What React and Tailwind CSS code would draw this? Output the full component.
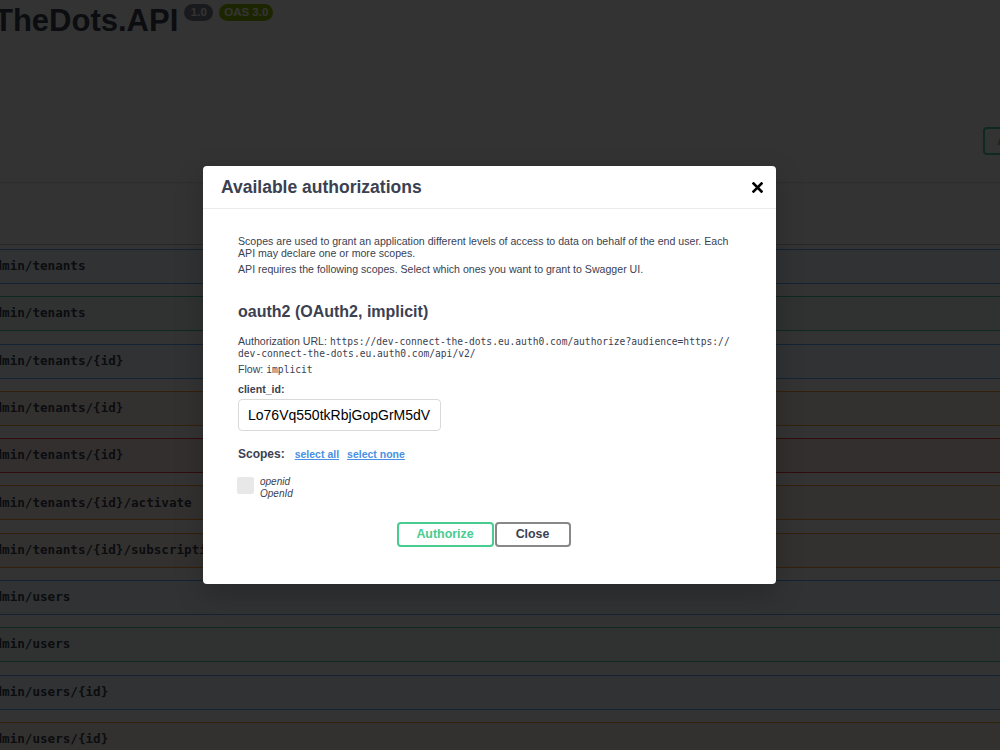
import React from "react";

const operations = [
  { method: "GET", path: "/api/admin/tenants" },
  { method: "POST", path: "/api/admin/tenants" },
  { method: "GET", path: "/api/admin/tenants/{id}" },
  { method: "PUT", path: "/api/admin/tenants/{id}" },
  { method: "DELETE", path: "/api/admin/tenants/{id}" },
  { method: "PUT", path: "/api/admin/tenants/{id}/activate" },
  { method: "PUT", path: "/api/admin/tenants/{id}/subscription" },
  { method: "GET", path: "/api/admin/users" },
  { method: "POST", path: "/api/admin/users" },
  { method: "GET", path: "/api/admin/users/{id}" },
  { method: "PUT", path: "/api/admin/users/{id}" },
];

const methodStyles = {
  GET: { row: "bg-[#61affe]/10 border-[#61affe]", badge: "bg-[#61affe]" },
  POST: { row: "bg-[#49cc90]/10 border-[#49cc90]", badge: "bg-[#49cc90]" },
  PUT: { row: "bg-[#fca130]/10 border-[#fca130]", badge: "bg-[#fca130]" },
  DELETE: { row: "bg-[#f93e3e]/10 border-[#f93e3e]", badge: "bg-[#f93e3e]" },
};

function OperationRow({ method, path }) {
  const s = methodStyles[method];
  return (
    <div className={`flex items-center h-[35px] border rounded-[4px] pl-[5px] ${s.row}`}>
      <span
        className={`w-[70px] h-[25px] rounded-[3px] flex items-center justify-center text-white text-[12px] font-bold ${s.badge}`}
      >
        {method}
      </span>
      <span className="ml-[9px] font-['DejaVu_Sans_Mono',monospace] text-[12.6px] font-semibold text-[#3b4151] whitespace-nowrap">
        {path}
      </span>
    </div>
  );
}

function LockIcon() {
  return (
    <svg width="14" height="14" viewBox="0 0 20 20" className="ml-[8px]" fill="#49cc90">
      <path d="M15.8 8H14V5.6C14 2.7 12.3 1 10 1S6 2.7 6 5.6V6h2v-.9C8 3.6 8.9 3 10 3s2 .6 2 2.1V8H4.2c-.7 0-1.2.5-1.2 1.2v8.6c0 .7.5 1.2 1.2 1.2h11.6c.7 0 1.2-.5 1.2-1.2V9.2c0-.7-.5-1.2-1.2-1.2z" />
    </svg>
  );
}

function CloseIcon() {
  return (
    <svg width="11" height="11" viewBox="0 0 11 11">
      <path d="M1.5 1.5 L9.5 9.5 M9.5 1.5 L1.5 9.5" stroke="#000" strokeWidth="2.6" strokeLinecap="square" />
    </svg>
  );
}

const mono = "font-['DejaVu_Sans_Mono',monospace] text-[9.65px]";

function AuthModal() {
  return (
    <div className="w-[573px] bg-white rounded-[4px] shadow-[0_10px_30px_0_rgba(0,0,0,0.2)] text-[#3b4151]">
      <div className="h-[43px] flex items-center justify-between pl-[18px] pr-[13px] border-b border-[#ebebeb]">
        <h3 className="text-[17.5px] font-bold text-[#3b4151]">Available authorizations</h3>
        <button className="flex items-center justify-center w-[12px] h-[12px]">
          <CloseIcon />
        </button>
      </div>

      <div className="px-[35px] pt-[26px] pb-[37px]">
        <p className="text-[10.6px] leading-[12px]">
          Scopes are used to grant an application different levels of access to data on behalf of the end user. Each API may declare one or more scopes.
        </p>
        <p className="mt-[4px] text-[10.6px] leading-[12px]">
          API requires the following scopes. Select which ones you want to grant to Swagger UI.
        </p>

        <h4 className="mt-[28px] text-[16px] leading-[18px] font-bold">oauth2 (OAuth2, implicit)</h4>

        <div className="mt-[14px] text-[10.6px] leading-[12px]">
          <div className="h-[12px] whitespace-nowrap">
            Authorization URL:{" "}
            <code className={mono}>https://dev-connect-the-dots.eu.auth0.com/authorize?audience=https://</code>
          </div>
          <div className="h-[12px] whitespace-nowrap">
            <code className={mono}>dev-connect-the-dots.eu.auth0.com/api/v2/</code>
          </div>
        </div>
        <div className="mt-[4px] h-[12px] text-[10.6px] leading-[12px]">
          Flow: <code className={mono}>implicit</code>
        </div>

        <label className="block mt-[8px] text-[10.6px] leading-[12px] font-bold">client_id:</label>
        <input
          readOnly
          value="Lo76Vq550tkRbjGopGrM5dV"
          className="block mt-[4px] w-[203px] h-[32px] border border-[#d9d9d9] rounded-[4px] px-[9px] text-[14px] text-black outline-none bg-white"
        />

        <div className="mt-[16px] flex items-baseline">
          <span className="text-[12px] leading-[14px] font-bold">Scopes:</span>
          <a href="#" className="ml-[10px] text-[10.5px] font-bold text-[#4990e2] underline">select all</a>
          <a href="#" className="ml-[8px] text-[10.5px] font-bold text-[#4990e2] underline">select none</a>
        </div>

        <div className="mt-[12px] flex items-start">
          <span className="mt-[2px] -ml-[1px] w-[17px] h-[17px] rounded-[2px] bg-[#e8e8e8]" />
          <div className="ml-[6px] text-[10px] leading-[12px] italic">
            <div className="mt-[1px]">openid</div>
            <div>OpenId</div>
          </div>
        </div>

        <div className="mt-[22px] flex justify-center gap-[1px]">
          <button className="w-[97px] h-[25px] border-2 border-[#49cc90] rounded-[4px] text-[12.4px] font-bold text-[#49cc90]">
            Authorize
          </button>
          <button className="mr-[12px] w-[76px] h-[25px] border-2 border-[#888888] rounded-[4px] text-[12.4px] font-bold text-[#3b4151]">
            Close
          </button>
        </div>
      </div>
    </div>
  );
}

export default function App() {
  return (
    <div className="relative w-full h-[750px] overflow-hidden bg-white font-['Liberation_Sans',Arial,sans-serif]">
      {/* API documentation page, scrolled sideways */}
      <div className="w-[1400px] -ml-[136px]">
        <div className="pt-[3px] pl-[6px] flex items-start">
          <h2 className="text-[31px] leading-[36px] font-bold text-[#3b4151] whitespace-nowrap">ConnectTheDots.API</h2>
          <span className="ml-[6px] mt-[1px] w-[29px] h-[17px] rounded-full bg-[#7d8492] text-white text-[11.5px] font-bold flex items-center justify-center">
            1.0
          </span>
          <span className="ml-[6px] mt-[1px] w-[54px] h-[17px] rounded-full bg-[#89bf04] text-white text-[11.5px] font-bold flex items-center justify-center">
            OAS 3.0
          </span>
        </div>

        <div className="mt-[61px] h-[82px] bg-white shadow-[0_1px_2px_0_rgba(0,0,0,0.15)] flex items-center justify-end pr-[171px]">
          <button className="w-[110px] h-[28px] border-2 border-[#49cc90] rounded-[4px] flex items-center justify-center text-[13px] font-bold text-[#49cc90]">
            Authorize
            <LockIcon />
          </button>
        </div>

        <div className="h-[63px] border-b border-[#3b4151]/30 flex items-center pl-[10px]">
          <span className="text-[24px] font-bold text-[#3b4151]">Admin</span>
        </div>

        <div className="mt-[4px] flex flex-col gap-[12.3px]">
          {operations.map((op, i) => (
            <OperationRow key={i} method={op.method} path={op.path} />
          ))}
        </div>
      </div>

      {/* dimming backdrop */}
      <div className="absolute inset-0 bg-[rgba(0,0,0,0.8)]" />

      {/* dialog */}
      <div className="absolute inset-0 flex items-center justify-center pr-[21px]">
        <AuthModal />
      </div>
    </div>
  );
}
